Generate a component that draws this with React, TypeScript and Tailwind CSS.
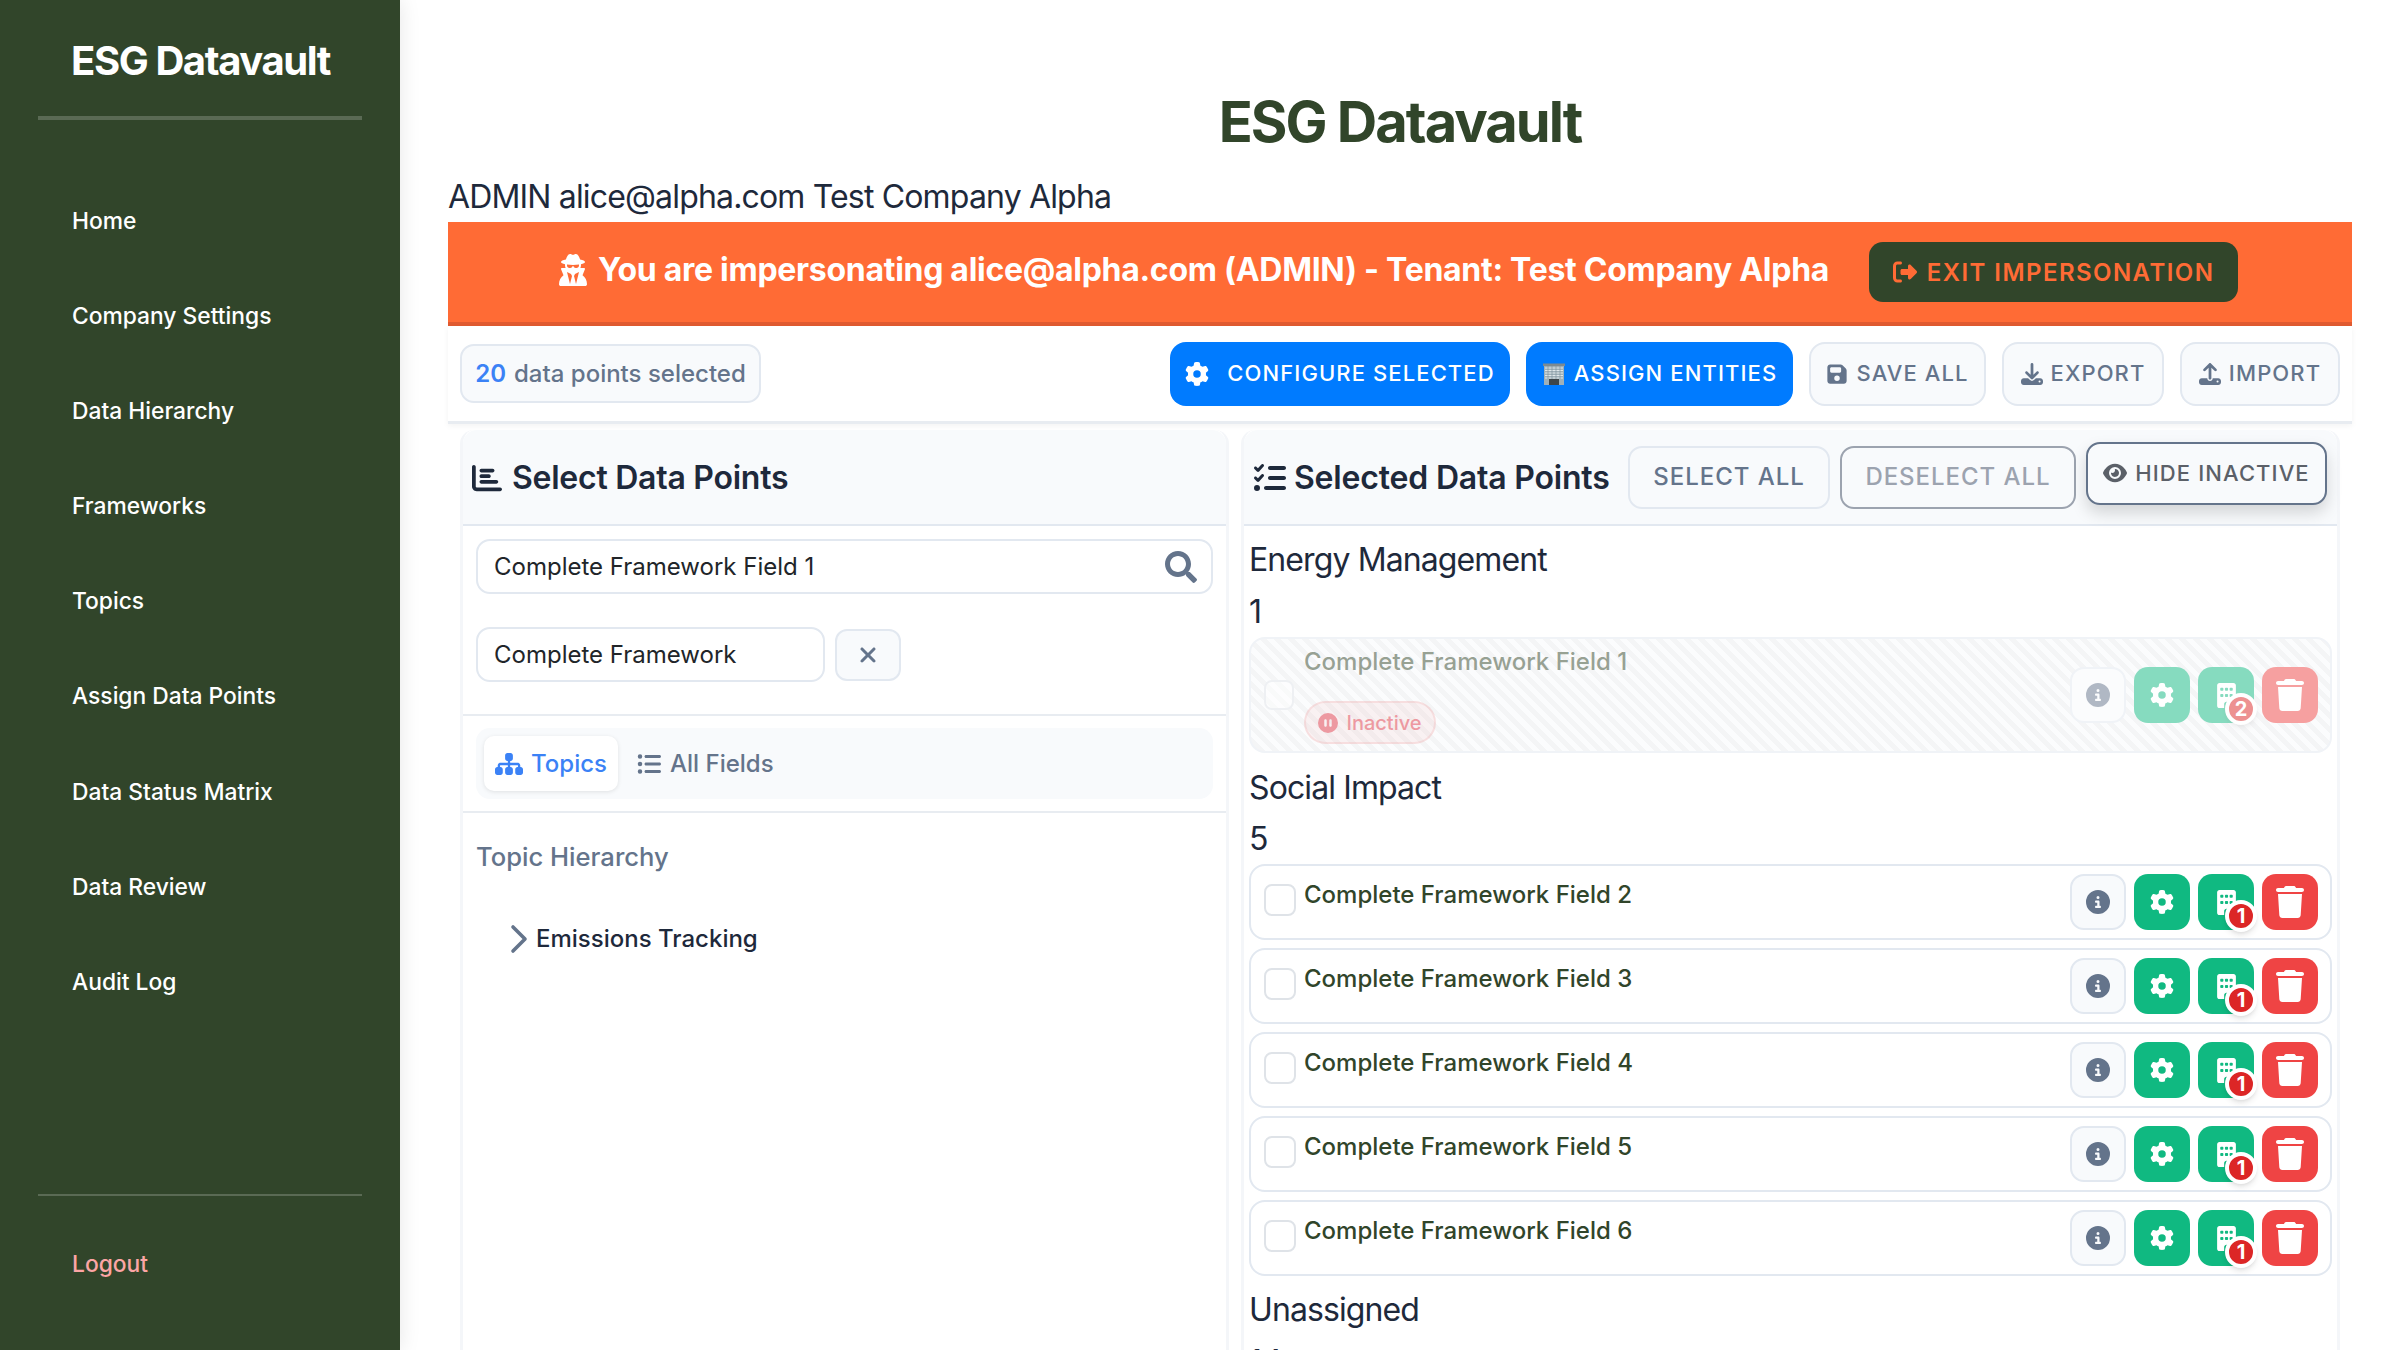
import React from "react";
import { FaSearch } from "react-icons/fa";
import {
  FaUserSecret, FaRightFromBracket, FaGear, FaFloppyDisk, FaDownload, FaUpload, FaChartBar, FaListCheck, FaEye,
  FaXmark, FaSitemap, FaListUl, FaCircleInfo, FaBuilding, FaTrash, FaCirclePause,
} from "react-icons/fa6";

const nav = ["Home", "Company Settings", "Data Hierarchy", "Frameworks", "Topics", "Assign Data Points", "Data Status Matrix", "Data Review", "Audit Log"];

function OfficeEmoji() {
  return (
    <svg width="24" height="24" viewBox="0 0 24 24" className="shrink-0">
      <rect x="2" y="3" width="20" height="20" fill="#9fb0b8" />
      <rect x="1" y="1.5" width="22" height="2.5" fill="#7d8a90" />
      <path d="M3 6h18M3 8.5h18M3 11h18M3 13.5h18M3 16h18" stroke="#dfe7ea" strokeWidth="1" />
      <path d="M6 4v13M10 4v13M14 4v13M18 4v13" stroke="#7f929b" strokeWidth="0.7" />
      <rect x="7" y="17" width="10" height="6" fill="#3d4549" />
    </svg>
  );
}

function ToolButton({ icon, label, primary, w }: { icon: React.ReactNode; label: string; primary?: boolean; w: string }) {
  return (
    <button
      className={`${w} h-[64px] rounded-[16px] flex items-center justify-center gap-[8px] text-[22px] font-medium tracking-[0.05em] uppercase ${
        primary ? "bg-[#007bff] text-white" : "bg-[#f8fafc] border-2 border-[#e2e8f0] text-[#64748b]"
      }`}
    >
      {icon}
      {label}
    </button>
  );
}

function Actions({ count }: { count: number }) {
  return (
    <div className="ml-auto flex items-center gap-[8px] shrink-0">
      <button className="w-[56px] h-[56px] rounded-[14px] bg-[#f8fafc] border-2 border-[#e2e8f0] flex items-center justify-center text-[#64748b]">
        <FaCircleInfo size={24} />
      </button>
      <button className="w-[56px] h-[56px] rounded-[14px] bg-[#10b981] flex items-center justify-center text-white">
        <FaGear size={24} />
      </button>
      <button className="relative w-[56px] h-[56px] rounded-[14px] bg-[#10b981] flex items-center justify-center text-white">
        <FaBuilding size={25} />
        <span className="absolute left-[27px] top-[26px] w-[32px] h-[32px] rounded-full border-4 border-white bg-[#dc2626] shadow-md text-white text-[20px] font-bold leading-none flex items-center justify-center">
          {count}
        </span>
      </button>
      <button className="w-[56px] h-[56px] rounded-[14px] bg-[#ef4444] flex items-center justify-center text-white">
        <FaTrash size={32} />
      </button>
    </div>
  );
}

function FieldRow({ n }: { n: number }) {
  return (
    <div className="h-[76px] rounded-[16px] border-2 border-[#e2e8f0] bg-white pl-[13px] pr-[12px] flex items-center">
      <span className="w-[32px] h-[32px] rounded-[8px] border-2 border-[#dfe3e8] bg-white shrink-0 mt-[-4px]" />
      <span className="ml-[8px] self-start mt-[11px] text-[24px] leading-[36px] font-medium text-[#31452a]">Complete Framework Field {n}</span>
      <Actions count={1} />
    </div>
  );
}

export default function App() {
  return (
    <div className="flex h-screen overflow-hidden bg-white font-[Inter,sans-serif] text-[#1e293b]">
      <aside className="w-[400px] shrink-0 h-full bg-[#31452a] shadow-[0_0_20px_rgba(0,0,0,0.1)] flex flex-col px-[38px] text-white z-10">
        <div className="h-[120px] border-b-4 border-white/20 pl-[33px] pt-[36px]">
          <h2 className="text-[40px] leading-[50px] font-bold tracking-[-0.035em] whitespace-nowrap">ESG Datavault</h2>
        </div>
        <nav className="mt-[53px] flex flex-col">
          {nav.map((n) => (
            <a key={n} className="h-[95.2px] flex items-center pl-[34px] text-[22.8px] font-medium">{n}</a>
          ))}
        </nav>
        <div className="mt-auto h-[156px] border-t-2 border-white/20 pl-[34px] pt-[52px]">
          <a className="text-[22.8px] leading-[32px] font-medium text-[#fca5a5]">Logout</a>
        </div>
      </aside>

      <main className="flex-1 min-w-0 px-[48px] h-full overflow-hidden">
        <h1 className="pt-[88px] text-center text-[56px] leading-[68px] font-bold tracking-[-0.035em] text-[#31452a]">ESG Datavault</h1>
        <div className="mt-[19px] mb-[3px] text-[32px] leading-[44px] h-[44px] tracking-[-0.026em]">ADMIN alice@alpha.com Test Company Alpha</div>

        <div className="h-[104px] pr-[5px] bg-[#ff6b35] border-b-4 border-[#e05a30] flex items-center justify-center gap-[40px] text-white">
          <div className="flex items-center gap-[9px] mb-[5px] text-[32px] font-bold tracking-[-0.009em]">
            <FaUserSecret size={32} />
            <span>You are impersonating alice@alpha.com (ADMIN) - Tenant: Test Company Alpha</span>
          </div>
          <button className="w-[369px] h-[60px] rounded-[14px] bg-[#31452a] text-[#ff6b35] flex items-center justify-center gap-[10px] text-[24px] font-semibold tracking-[0.06em] uppercase">
            <FaRightFromBracket size={24} />
            <span className="mt-[2px]">Exit Impersonation</span>
          </button>
        </div>

        <div className="h-[98px] px-[12px] flex items-center gap-[16px] border-b-[3px] border-[#e8ecf1] shadow-[0_2px_6px_rgba(0,0,0,0.05)]">
          <div className="mr-auto w-[301px] h-[59px] rounded-[14px] bg-[#f8fafc] border-2 border-[#e2e8f0] flex items-center justify-center gap-[8px] text-[24px] font-medium text-[#64748b]">
            <span className="font-semibold text-[#3b82f6]">20</span> data points selected
          </div>
          <ToolButton primary w="w-[340px]" icon={<FaGear size={24} className="mr-[10px]" />} label="Configure Selected" />
          <ToolButton primary w="w-[267px]" icon={<OfficeEmoji />} label="Assign Entities" />
          <ToolButton w="w-[177px]" icon={<FaFloppyDisk size={22} />} label="Save All" />
          <ToolButton w="w-[162px]" icon={<FaDownload size={22} />} label="Export" />
          <ToolButton w="w-[160px]" icon={<FaUpload size={22} />} label="Import" />
        </div>

        <div className="flex gap-[12px] px-[12px] pt-[6px] h-[930px]">
          <section className="w-[769px] shrink-0 rounded-t-[14px] border-x-[3px] border-[#f4f6f9] bg-white flex flex-col">
            <header className="h-[96px] bg-[#f8fafc] rounded-t-[14px] border-b-2 border-[#e2e8f0] flex items-center gap-[10px] pl-[9px] pt-[2px] text-[32px] font-semibold tracking-[-0.008em]">
              <FaChartBar size={30} />
              <span>Select Data Points</span>
            </header>
            <div className="h-[190px] border-b-2 border-[#e8ecf1] px-[13px] pt-[13px]">
              <div className="h-[55px] rounded-[14px] border-2 border-[#e2e8f0] flex items-center pl-[16px] pr-[14px] text-[24px] text-[#212529]">
                Complete Framework Field 1
                <FaSearch size={32} className="ml-auto text-[#64748b]" />
              </div>
              <div className="mt-[33px] flex items-center gap-[10px]">
                <div className="w-[349px] h-[55px] rounded-[14px] border-2 border-[#e2e8f0] flex items-center px-[16px] text-[24px] text-[#212529]">
                  Complete Framework
                </div>
                <button className="w-[66px] h-[52px] rounded-[12px] border-2 border-[#e2e8f0] bg-[#f8fafc] flex items-center justify-center text-[#64748b]">
                  <FaXmark size={24} />
                </button>
              </div>
            </div>
            <div className="h-[97px] border-b-2 border-[#e8ecf1] px-[13px] pt-[12px]">
              <div className="h-[71px] rounded-[14px] bg-[#f8fafc] flex items-center pl-[8px] text-[24px] font-medium">
                <button className="w-[134px] h-[55px] rounded-[10px] bg-white shadow-[0_1px_4px_rgba(0,0,0,0.1)] flex items-center justify-center gap-[8px] text-[#3b82f6]">
                  <FaSitemap size={28} />
                  Topics
                </button>
                <button className="ml-[19px] h-[55px] flex items-center gap-[9px] text-[#64748b]">
                  <FaListUl size={24} />
                  All Fields
                </button>
              </div>
            </div>
            <div className="px-[13px]">
              <div className="mt-[26px] text-[25.6px] leading-[36px] font-medium text-[#64748b]">Topic Hierarchy</div>
              <div className="mt-[46px] ml-[34px] flex items-center gap-[8px] text-[24px] leading-[36px] font-medium">
                <svg width="18" height="30" viewBox="0 0 18 30" fill="none" stroke="#64748b" strokeWidth="3.6" strokeLinecap="round" strokeLinejoin="round" className="shrink-0">
                  <polyline points="3,3 15,15 3,27" />
                </svg>
                Emissions Tracking
              </div>
            </div>
          </section>

          <section className="flex-1 min-w-0 rounded-t-[14px] border-x-[3px] border-[#f4f6f9] bg-white flex flex-col">
            <header className="h-[96px] shrink-0 bg-[#f8fafc] rounded-t-[14px] border-b-2 border-[#e2e8f0] flex items-center pl-[10px] pr-[10px] text-[32px] font-semibold tracking-[-0.006em]">
              <FaListCheck size={32} className="mt-[2px]" />
              <span className="ml-[8px] mt-[2px]">Selected Data Points</span>
              <div className="ml-auto flex items-center gap-[10px] font-medium">
                <button className="w-[202px] h-[63px] rounded-[14px] border-2 border-[#e2e8f0] text-[24px] tracking-[0.04em] uppercase text-[#64748b]">Select All</button>
                <button className="w-[236px] h-[63px] rounded-[14px] border-2 border-[#9ca3af] text-[24px] tracking-[0.04em] uppercase text-[#9ca3af]">Deselect All</button>
                <button className="w-[241px] h-[63px] mb-[8px] rounded-[14px] border-2 border-[#64748b] bg-[#f8fafc] shadow-[0_8px_16px_rgba(0,0,0,0.15)] flex items-center justify-center gap-[8px] text-[22px] tracking-[0.05em] uppercase text-[#5b6068]">
                  <FaEye size={24} />
                  Hide Inactive
                </button>
              </div>
            </header>
            <div className="px-[5px] overflow-hidden">
              <h3 className="mt-[12px] text-[32px] leading-[44px] font-normal tracking-[-0.028em]">Energy Management</h3>
              <div className="mt-[8px] text-[32px] leading-[44px]">1</div>
              <div className="mt-[3px] h-[116px] rounded-[16px] border-2 border-[#e2e8f0] opacity-50 pl-[13px] pr-[12px] flex items-center bg-[repeating-linear-gradient(45deg,#f8fafc,#f8fafc_5px,#ebecef_5px,#ebecef_10px)]">
                <span className="w-[30px] h-[30px] rounded-[8px] border-2 border-[#dfe3e8] bg-white/50 shrink-0" />
                <div className="ml-[10px] self-start mt-[5px]">
                  <div className="text-[24px] leading-[36px] font-medium text-[#31452a]">Complete Framework Field 1</div>
                  <div className="mt-[21px] w-[132px] h-[43px] rounded-full border-2 border-[#dc2626]/20 bg-[#dc2626]/10 flex items-center justify-center gap-[8px] text-[20px] font-medium text-[#dc3545]">
                    <FaCirclePause size={20} />
                    Inactive
                  </div>
                </div>
                <Actions count={2} />
              </div>
              <h3 className="mt-[13px] text-[32px] leading-[44px] font-normal tracking-[-0.028em]">Social Impact</h3>
              <div className="mt-[7px] text-[32px] leading-[44px]">5</div>
              <div className="mt-[3px] flex flex-col gap-[8px]">
                {[2, 3, 4, 5, 6].map((n) => (
                  <FieldRow key={n} n={n} />
                ))}
              </div>
              <h3 className="mt-[12px] text-[32px] leading-[44px] font-normal tracking-[-0.028em]">Unassigned</h3>
              <div className="mt-[8px] text-[32px] leading-[44px]">14</div>
            </div>
          </section>
        </div>
      </main>
    </div>
  );
}
